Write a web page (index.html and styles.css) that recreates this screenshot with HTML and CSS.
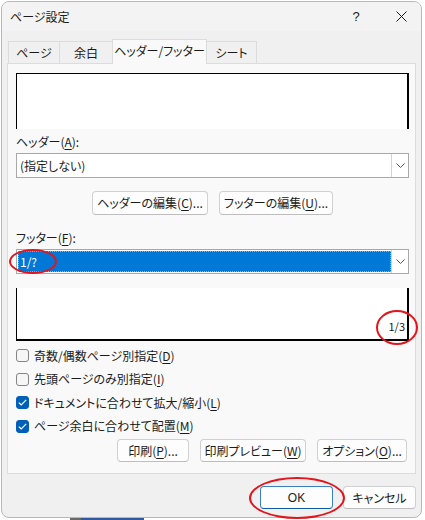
FILE: index.html
```
<!DOCTYPE html>
<html lang="ja">
<head>
<meta charset="utf-8">
<title>ページ設定</title>
<link rel="stylesheet" href="styles.css">
</head>
<body>
<div class="dialog">
  <div class="titlebar">
    <span class="title">ページ設定</span>
    <span class="help">?</span>
    <span class="close"><svg width="11" height="11" viewBox="0 0 11 11"><path d="M0.5 0.5 L10.5 10.5 M10.5 0.5 L0.5 10.5" stroke="#1a1a1a" stroke-width="1" fill="none"/></svg></span>
  </div>
  <div class="body">
    <div class="tabs">
      <div class="tab w1">ページ</div>
      <div class="tab w2">余白</div>
      <div class="tab active w3">ヘッダー/フッター</div>
      <div class="tab w4">シート</div>
    </div>
    <div class="panel">
      <div class="preview preview-top"></div>
      <div class="label">ヘッダー(<u>A</u>):</div>
      <div class="combo">
        <div class="combo-text">(指定しない)</div>
        <div class="combo-btn"><svg width="9" height="5" viewBox="0 0 9 5"><path d="M0.5 0.5 L4.5 4.5 L8.5 0.5" stroke="#555" stroke-width="1" fill="none"/></svg></div>
      </div>
      <div class="edit-row">
        <div class="btn bw-h">ヘッダーの編集(<u>C</u>)...</div>
        <div class="btn bw-f">フッターの編集(<u>U</u>)...</div>
      </div>
      <div class="label label-f">フッター(<u>F</u>):</div>
      <div class="combo">
        <div class="combo-text selected"><span>1/?</span></div>
        <div class="combo-btn"><svg width="9" height="5" viewBox="0 0 9 5"><path d="M0.5 0.5 L4.5 4.5 L8.5 0.5" stroke="#555" stroke-width="1" fill="none"/></svg></div>
      </div>
      <div class="preview preview-bottom"><span class="pagenum">1/3</span></div>
      <div class="checks">
        <div class="check"><span class="box"></span>奇数/偶数ページ別指定(<u>D</u>)</div>
        <div class="check"><span class="box"></span>先頭ページのみ別指定(<u>I</u>)</div>
        <div class="check"><span class="box on"><svg width="9" height="7" viewBox="0 0 9 7"><path d="M0.8 3.6 L3.2 5.8 L8.2 0.8" stroke="#fff" stroke-width="1.2" fill="none"/></svg></span>ドキュメントに合わせて拡大/縮小(<u>L</u>)</div>
        <div class="check"><span class="box on"><svg width="9" height="7" viewBox="0 0 9 7"><path d="M0.8 3.6 L3.2 5.8 L8.2 0.8" stroke="#fff" stroke-width="1.2" fill="none"/></svg></span>ページ余白に合わせて配置(<u>M</u>)</div>
      </div>
      <div class="print-row">
        <div class="btn bw-p">印刷(<u>P</u>)...</div>
        <div class="btn bw-pv">印刷プレビュー(<u>W</u>)</div>
        <div class="btn bw-o">オプション(<u>O</u>)...</div>
      </div>
    </div>
    <div class="footer">
      <div class="btn ok">OK</div>
      <div class="btn cancel">キャンセル</div>
    </div>
  </div>
</div>
<div class="strip"></div>
<div class="mark m1"></div>
<div class="mark m2"></div>
<div class="mark m3"></div>
</body>
</html>
```
FILE: styles.css
```
html, body {
  margin: 0;
  padding: 0;
  background: #ffffff;
}
body {
  width: 425px;
  height: 520px;
  overflow: hidden;
  position: relative;
  font-family: "Noto Sans CJK JP", "Noto Sans", sans-serif;
  font-size: 12px;
  font-feature-settings: "palt";
  color: #1b1b1b;
}
u {
  text-decoration: underline;
  text-underline-offset: 2px;
  text-decoration-thickness: 1px;
}
.dialog {
  margin: 1px 0 0 1px;
  width: 421px;
  height: 517px;
  box-sizing: border-box;
  border: 1px solid #b8b8b8;
  border-radius: 8px;
  background: #f0f0f0;
  overflow: hidden;
}
.titlebar {
  height: 29px;
  display: flex;
  align-items: center;
  background: #f3f3f3;
  padding-left: 8px;
}
.title {
  flex: 1;
  line-height: 16px;
}
.help {
  width: 20px;
  text-align: center;
  font-family: "Liberation Sans", sans-serif;
  font-size: 13px;
  margin-right: 25px;
}
.close {
  width: 20px;
  height: 11px;
  display: flex;
  justify-content: center;
  margin-right: 10px;
}
.body {
  padding: 8px 5px 0 5px;
}
.tabs {
  display: flex;
  align-items: flex-end;
  height: 24px;
  padding-left: 1px;
}
.tab {
  height: 22px;
  box-sizing: border-box;
  border: 1px solid #dcdcdc;
  border-bottom: none;
  border-left: none;
  background: #f0f0f0;
  display: flex;
  align-items: center;
  justify-content: center;
  line-height: 16px;
}
.tab.w1 { width: 52px; border-left: 1px solid #dcdcdc; }
.tab.w2 { width: 53px; }
.tab.w3 { width: 95px; }
.tab.w4 { width: 50px; }
.tab.active {
  height: 25px;
  background: #f9f9f9;
  border-left: 1px solid #dcdcdc;
  margin-left: -1px;
  margin-bottom: -1px;
  position: relative;
  z-index: 1;
  padding-bottom: 2px;
}
.panel {
  height: 411px;
  box-sizing: border-box;
  border: 1px solid #dcdcdc;
  background: #f9f9f9;
  padding: 9px 6px 0 8px;
}
.preview {
  background: #ffffff;
  box-sizing: border-box;
}
.preview-top {
  height: 56px;
  border-top: 1px solid #000;
  border-left: 1px solid #000;
  border-right: 2px solid #000;
}
.preview-bottom {
  margin-top: 14px;
  height: 53px;
  border-left: 1px solid #000;
  border-right: 2px solid #000;
  border-bottom: 2px solid #000;
  display: flex;
  justify-content: flex-end;
  align-items: flex-end;
  padding: 0 2px 6px 0;
}
.pagenum {
  font-family: "Noto Sans CJK JP", sans-serif;
  font-size: 11px;
  line-height: 14px;
}
.label {
  margin-top: 2px;
  height: 22px;
  line-height: 22px;
}
.label-f {
  margin-top: 12px;
}
.combo {
  height: 25px;
  box-sizing: border-box;
  border: 1px solid #a8a8a8;
  background: #ffffff;
  display: flex;
}
.combo-text {
  flex: 1;
  display: flex;
  align-items: center;
  padding-left: 3px;
  line-height: 16px;
}
.combo-text.selected {
  margin: 1px 0 1px 1px;
  padding-left: 2px;
  background: #0078d7;
  color: #ffffff;
  outline: 1px dotted #d9a35a;
  outline-offset: -1px;
}
.combo-btn {
  width: 17px;
  box-sizing: border-box;
  border-left: 1px solid #d4d4d4;
  display: flex;
  align-items: center;
  justify-content: center;
  background: #ffffff;
}
.edit-row {
  margin-top: 13px;
  display: flex;
  justify-content: center;
  gap: 11px;
}
.btn {
  height: 24px;
  box-sizing: border-box;
  border: 1px solid #d0d0d0;
  border-bottom-color: #bdbdbd;
  border-radius: 4px;
  background: #fdfdfd;
  display: flex;
  align-items: center;
  justify-content: center;
  line-height: 16px;
  white-space: nowrap;
}
.bw-h { width: 116px; }
.bw-f { width: 114px; }
.checks {
  margin-top: 3px;
}
.check {
  height: 23.5px;
  display: flex;
  align-items: center;
  line-height: 16px;
}
.box {
  width: 13px;
  height: 13px;
  box-sizing: border-box;
  border: 1px solid #858585;
  border-radius: 3px;
  background: #f6f6f6;
  margin-right: 5px;
  display: flex;
  align-items: center;
  justify-content: center;
}
.box.on {
  background: #005fb8;
  border-color: #005fb8;
}
.print-row {
  margin-top: 1px;
  display: flex;
  justify-content: flex-end;
  gap: 11px;
  padding-right: 2px;
}
.print-row .btn {
  height: 23px;
}
.bw-p { width: 72px; }
.bw-pv { width: 106px; }
.bw-o { width: 90px; }
.footer {
  margin-top: 12px;
  display: flex;
  justify-content: flex-end;
  gap: 10px;
}
.footer .btn {
  width: 73px;
  height: 23px;
}
.btn.ok {
  border-color: #3d7fc4;
  border-bottom-color: #0f5aa8;
  font-family: "Liberation Sans", sans-serif;
}
.strip {
  height: 2px;
  background: linear-gradient(to right, #ffffff 0, #ffffff 70px, #6a6a6a 70px, #6a6a6a 81px, #2f5aa0 81px, #2f5aa0 144px, #ffffff 144px);
}
.mark {
  position: absolute;
  border: 2px solid #e3151c;
  border-radius: 50%;
  box-sizing: border-box;
}
.m1 { left: 9px; top: 249px; width: 48px; height: 25px; }
.m2 { left: 376px; top: 310px; width: 42px; height: 35px; }
.m3 { left: 249px; top: 477px; width: 96px; height: 42px; }
```
